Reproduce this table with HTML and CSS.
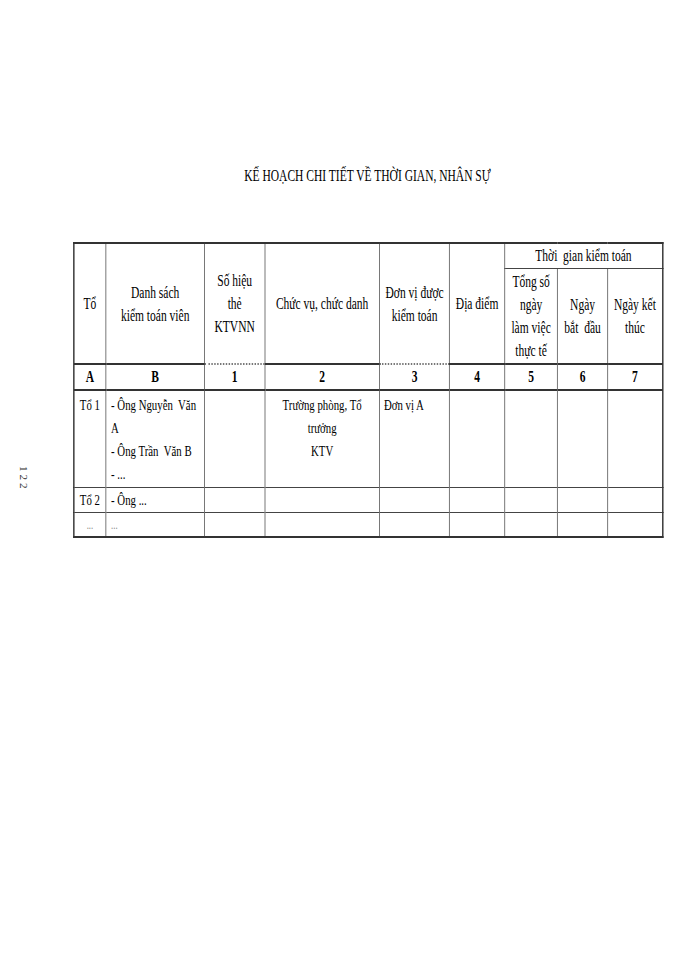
FILE: index.html
```html
<!DOCTYPE html>
<html lang="vi">
<head>
<meta charset="utf-8">
<title>Kế hoạch chi tiết về thời gian, nhân sự</title>
<link rel="stylesheet" href="styles.css">
</head>
<body>
<div class="page">
  <div class="gutter"><div class="pageno">122</div></div>
  <div class="sheet">
    <h1 class="title">KẾ HOẠCH CHI TIẾT VỀ THỜI GIAN, NHÂN SỰ</h1>
    <table class="plan">
      <colgroup>
        <col class="cA"><col class="cB"><col class="c1"><col class="c2"><col class="c3"><col class="c4"><col class="c5"><col class="c6"><col class="c7">
      </colgroup>
      <thead>
        <tr class="r-h1">
          <th rowspan="2" class="hb">Tổ</th>
          <th rowspan="2" class="hb">Danh sách<br>kiểm toán viên</th>
          <th rowspan="2" class="hd">Số hiệu<br>thẻ<br>KTVNN</th>
          <th rowspan="2" class="hb">Chức vụ, chức danh</th>
          <th rowspan="2" class="hd">Đơn vị được<br>kiểm toán</th>
          <th rowspan="2" class="hb">Địa điểm</th>
          <th colspan="3" class="group">Thời&nbsp; gian kiểm toán</th>
        </tr>
        <tr class="r-h2">
          <th class="hb">Tổng số<br>ngày<br>làm việc<br>thực tế</th>
          <th class="hb">Ngày<br>bắt&nbsp; đầu</th>
          <th class="hb">Ngày kết<br>thúc</th>
        </tr>
      </thead>
      <tbody>
        <tr class="r-num">
          <td>A</td><td>B</td><td>1</td><td>2</td><td>3</td><td>4</td><td>5</td><td>6</td><td>7</td>
        </tr>
        <tr class="r-t1">
          <td class="ca">Tổ 1</td>
          <td class="cb">- Ông Nguyễn&nbsp; Văn<br>A<br>- Ông Trần&nbsp; Văn B<br>- ...</td>
          <td></td>
          <td class="cc">Trường phòng, Tổ<br>trưởng<br>KTV</td>
          <td class="cd">Đơn vị A</td>
          <td></td><td></td><td></td><td></td>
        </tr>
        <tr class="r-t2">
          <td class="ca">Tổ 2</td>
          <td class="cb">- Ông ...</td>
          <td></td><td></td><td></td><td></td><td></td><td></td><td></td>
        </tr>
        <tr class="r-last">
          <td class="ca dots">...</td>
          <td class="cb dots">...</td>
          <td></td><td></td><td></td><td></td><td></td><td></td><td></td>
        </tr>
      </tbody>
    </table>
  </div>
</div>
</body>
</html>
```

FILE: styles.css
```css
html, body {
  margin: 0;
  padding: 0;
  background: #fff;
  overflow: hidden;
}

.page {
  display: flex;
  width: 700px;
  height: 960px;
}

.gutter {
  flex: none;
  width: 40px;
}

.pageno {
  writing-mode: vertical-rl;
  font-family: "Liberation Serif", "Times New Roman", serif;
  font-size: 11px;
  line-height: 12px;
  letter-spacing: 3px;
  color: #333;
  margin: 466px 0 0 18px;
}

.sheet {
  flex: none;
  width: 864px;
  padding-top: 166px;
  transform: scaleX(0.72);
  transform-origin: 0 0;
  font-family: "Liberation Serif", "Times New Roman", serif;
  color: #000;
}

.title {
  margin: 0 0 56px 45.83px;
  width: 818px;
  text-align: center;
  font-size: 16px;
  line-height: 20px;
  font-weight: normal;
}

.plan {
  margin-left: 45.83px;
  width: 818px;
  table-layout: fixed;
  border-collapse: collapse;
  border-top: 2px solid #333;
  border-bottom: 2px solid #333;
  border-left: 2.6px solid #333;
  border-right: 2.6px solid #333;
}

.cA { width: 44.4px; }
.cB { width: 137.5px; }
.c1 { width: 83.3px; }
.c2 { width: 159.7px; }
.c3 { width: 97.2px; }
.c4 { width: 76.4px; }
.c5 { width: 73.6px; }
.c6 { width: 69.4px; }
.c7 { width: 76.4px; }

.plan th,
.plan td {
  padding: 0;
  border-left: 1.4px solid #444;
  border-right: 1.4px solid #444;
  border-top: 1px solid #444;
  border-bottom: 1px solid #444;
}

.plan th {
  font-weight: normal;
  font-size: 16px;
  line-height: 23px;
  text-align: center;
  vertical-align: middle;
  white-space: nowrap;
}

.plan th.hb {
  border-bottom: 2px solid #333;
}

.plan th.hd {
  border-bottom: 2px dotted #777;
}

.r-h1 { height: 25px; }
.r-h2 { height: 96px; }
.r-num { height: 26px; }
.r-t1 { height: 97px; }
.r-t2 { height: 25px; }
.r-last { height: 25px; }

.r-num td {
  font-weight: bold;
  font-size: 16px;
  line-height: 22px;
  text-align: center;
  vertical-align: middle;
  border-top: none;
  border-bottom: 2px solid #333;
}

.r-t1 td,
.r-t2 td,
.r-last td {
  font-size: 15px;
  white-space: nowrap;
}

.r-t1 td {
  line-height: 23px;
  vertical-align: top;
  padding-top: 3px;
  border-bottom: 1px dashed #555;
}

.r-t2 td {
  line-height: 21px;
  vertical-align: middle;
  padding-top: 2px;
  border-bottom: 1px dashed #555;
}

.r-last td {
  line-height: 21px;
  vertical-align: middle;
  padding-top: 2px;
}

.plan td.ca { text-align: center; }
.plan td.cb { text-align: left; padding-left: 7px; }
.plan td.cc { text-align: center; }
.plan td.cd { text-align: left; padding-left: 5.5px; }

.plan td.dots {
  color: #888;
  font-size: 12px;
}
```
